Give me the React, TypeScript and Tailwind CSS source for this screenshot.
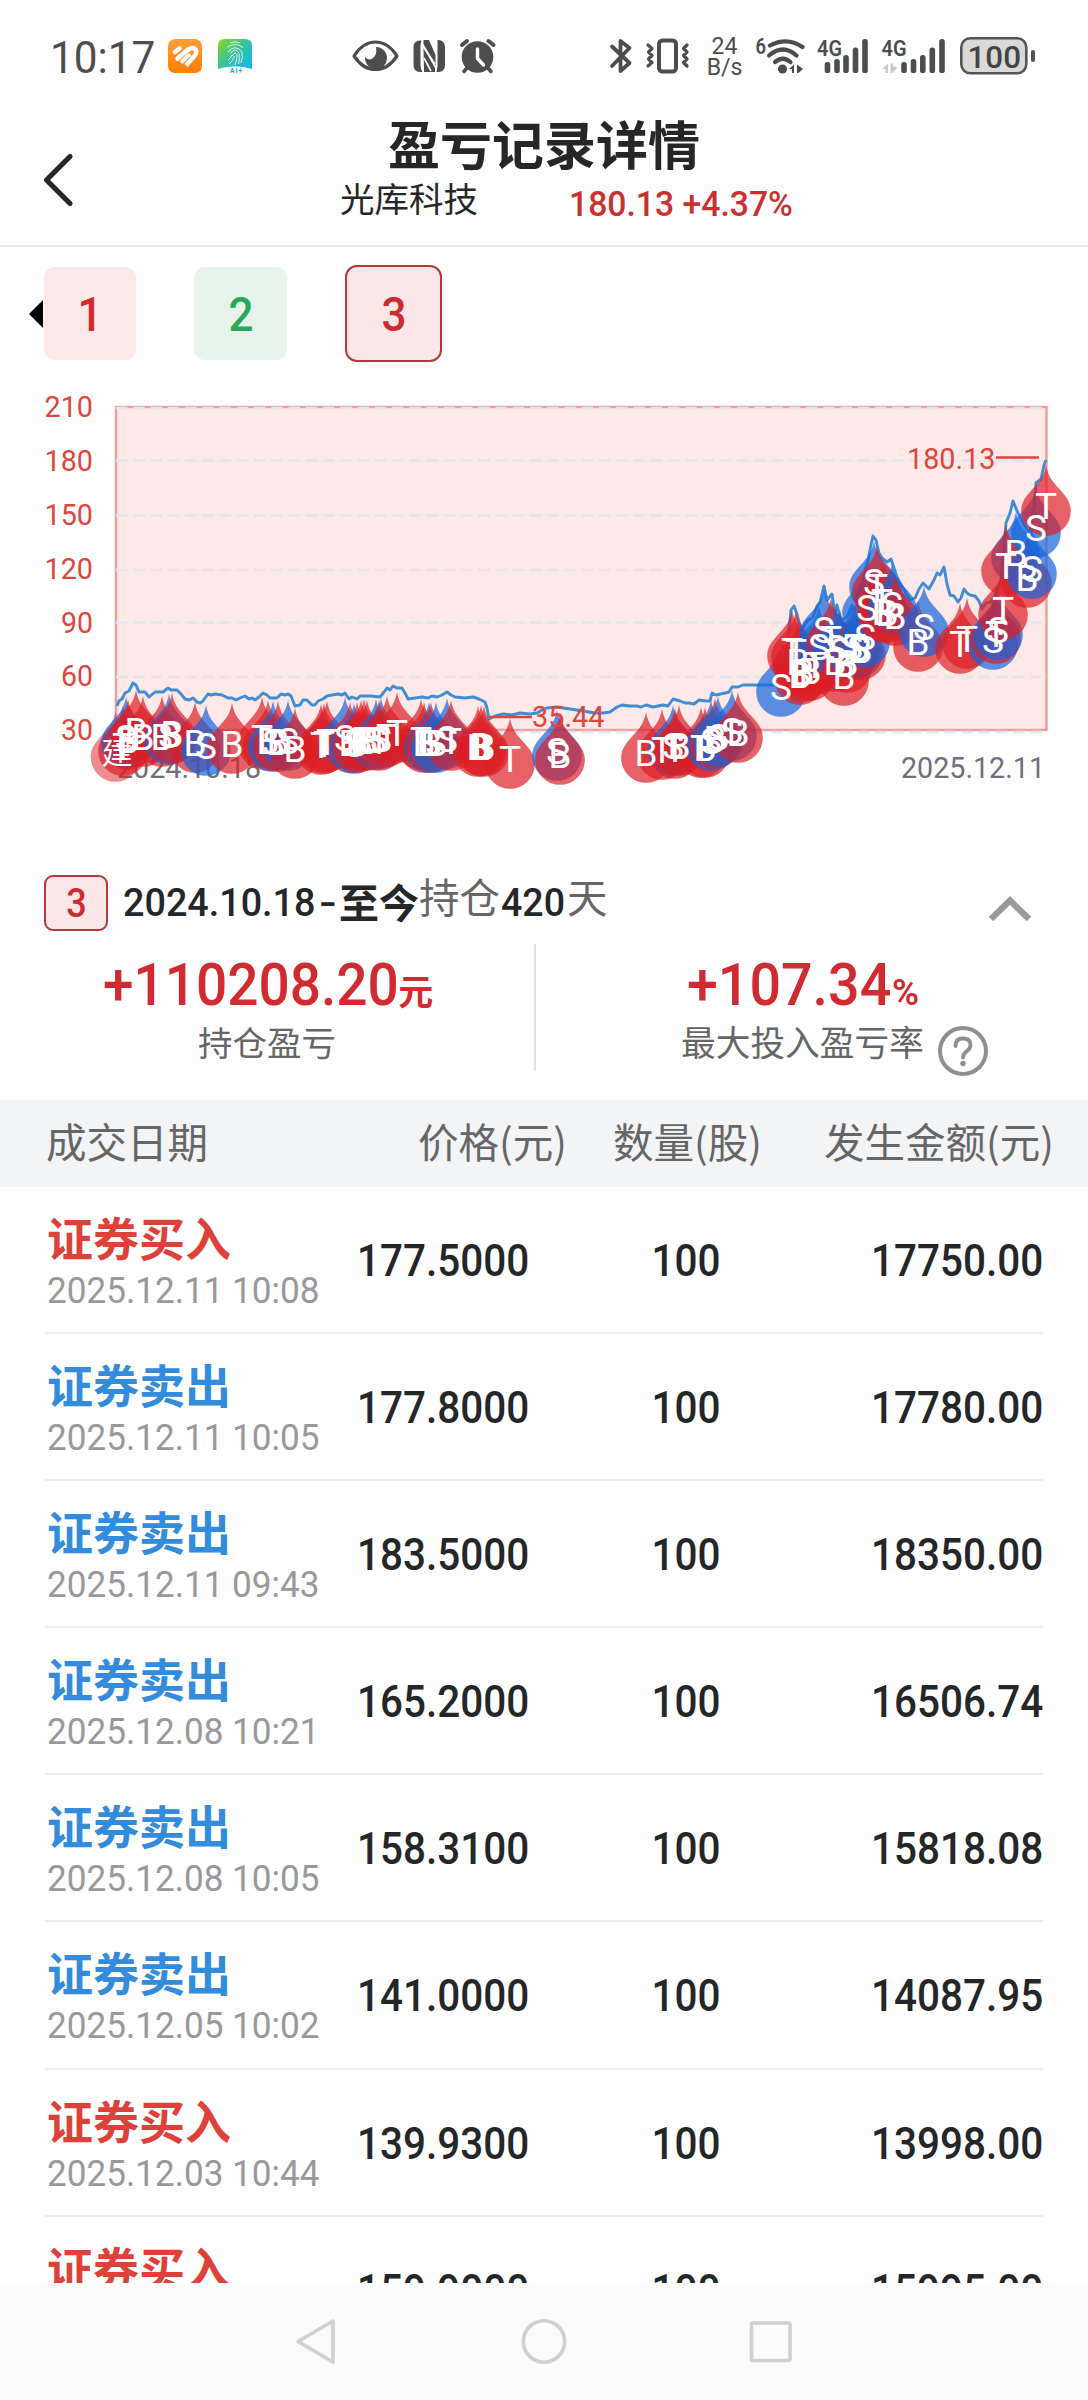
import React from "react";

const CJK = "font-['Noto_Sans_CJK_SC',sans-serif]";
const INK = "#4d4d4d";

/* ---------- status bar ---------- */

function SignalBars({ xs, x4g }: { xs: number[]; x4g: number }) {
  const tops = [62, 59, 55, 47.5, 39];
  return (
    <>
      <text x={x4g} y="55.5" fontSize="22.5" fontWeight="600" textLength="25" lengthAdjust="spacingAndGlyphs" fill={INK}>
        4G
      </text>
      {xs.map((x, i) => (
        <rect key={x} x={x - 2.8} y={tops[i]} width="5.6" height={73 - tops[i]} rx="2.6" fill={INK} />
      ))}
    </>
  );
}

function StatusBar() {
  return (
    <div className="flex h-[112px] items-start pt-[36px] pl-[50px] text-[#4d4d4d]">
      <div className="w-[117px] shrink-0">
        <span className="mt-px inline-block origin-left scale-x-[0.97] text-[43.6px] leading-[43px]">10:17</span>
      </div>
      <svg className="h-[40px] w-[36px] shrink-0" viewBox="167 36 36 40">
        <defs>
          <linearGradient id="orange" x1="0" y1="0" x2="0" y2="1">
            <stop offset="0" stopColor="#ff9f3a" />
            <stop offset="1" stopColor="#ff7d00" />
          </linearGradient>
        </defs>
        <rect x="168" y="39" width="34" height="34" rx="7" fill="url(#orange)" />
        <path d="M175 52 L179.500 48.500 M177.500 58.500 L187.500 50" fill="none" stroke="#fff" strokeWidth="4.600" strokeLinecap="round" />
        <path d="M187 50.500 Q192.500 46 195.500 49.500 Q197.500 52.500 194 56.500 L186 65.500" fill="none" stroke="#fff" strokeWidth="4.400" strokeLinecap="butt" strokeLinejoin="round" />
        <path d="M181 62.500 L190 54" stroke="#fff" strokeWidth="3.800" />
      </svg>
      <svg className="ml-[14px] h-[40px] w-[36px] shrink-0" viewBox="217 36 36 40">
        <defs>
          <linearGradient id="green" x1="0" y1="0" x2="1" y2="1">
            <stop offset="0" stopColor="#8fd41c" />
            <stop offset="0.5" stopColor="#35c3a0" />
            <stop offset="1" stopColor="#12b5f5" />
          </linearGradient>
        </defs>
        <path d="M218 46 Q218 39 225 39 H245 Q252 39 252 46 V69 Q235 63.500 218 69 Z" fill="url(#green)" />
        <g fill="none" stroke="#fff" strokeWidth="0.900" opacity="0.9">
          <path d="M230 43 Q235 40.500 240 43" />
          <path d="M227 47.500 Q235 41.500 243 47.500" />
          <path d="M228 52 Q235 43.500 242 52 Q243 58 241 63" />
          <path d="M230.500 53.500 Q235 46.500 239 53 Q240 59 238.500 64" />
          <path d="M232.500 56 Q235 50 237 55 Q237 60 235 65" />
          <path d="M228 60 Q231 58 232 55 M229 64 Q233 61 234.500 56" />
        </g>
        <text x="230" y="72.500" fontSize="6.500" fontWeight="700" fill="#1fa9c4" textLength="12">
          AI+
        </text>
      </svg>
      <svg className="ml-[97px] h-[40px] w-[50px] shrink-0" viewBox="350 36 50 40">
        <path d="M354 56 Q363 42 375.500 42 Q388 42 397 56 Q388 69.500 375.500 69.500 Q363 69.500 354 56 Z" fill="none" stroke={INK} strokeWidth="3.200" strokeLinejoin="round" />
        <path d="M376 47 A11 11 0 1 1 365 57 Q368 61 372.500 58.500 Q377.500 55 376 47 Z" fill={INK} />
      </svg>
      <svg className="ml-[11px] h-[40px] w-[36px] shrink-0" viewBox="411 36 36 40">
        <path d="M420 40.500 Q413.500 41 413.500 47 V65 Q413.500 71.500 420 72 H422.500 Q420.500 69 420.500 65 V46 Q420.500 43 421.500 40.500 Z" fill={INK} />
        <path d="M437.500 40 H439 Q445 41 445 47 V65 Q445 71.500 438.500 72 H436.500 L437.500 66 Z" fill={INK} />
        <path d="M423.500 48 L435 68 V72 H424 Z M423.500 40 H429 L435.500 55 V66 L423.500 44 Z" fill={INK} />
        <path d="M424 47.500 L435 64 M424 58 L431 71" stroke="#fff" strokeWidth="1.600" />
      </svg>
      <svg className="ml-[10px] h-[40px] w-[41px] shrink-0" viewBox="457 36 41 40">
        <circle cx="477.500" cy="57" r="15.800" fill={INK} />
        <path d="M462 45 L467 41 M493.500 45 L488.500 41" stroke={INK} strokeWidth="4" strokeLinecap="round" />
        <path d="M467 68 L464 71.500 M488 68 L491 71.500" stroke={INK} strokeWidth="3.600" strokeLinecap="round" />
        <path d="M477.500 49 V58.500 L483.500 65" fill="none" stroke="#fff" strokeWidth="3.400" strokeLinecap="round" strokeLinejoin="round" />
      </svg>
      <svg className="ml-[109px] h-[40px] w-[28px] shrink-0" viewBox="607 36 28 40">
        <path d="M612 46.500 L629.500 63 L620.500 71 V41 L629.500 48 L612 66" fill="none" stroke={INK} strokeWidth="3.800" strokeLinecap="round" strokeLinejoin="round" />
      </svg>
      <svg className="ml-[9px] h-[40px] w-[47px] shrink-0" viewBox="644 36 47 40">
        <rect x="659" y="40.500" width="17" height="31" rx="3.500" fill="none" stroke={INK} strokeWidth="4" />
        <path
          d="M648 45 L652 48.500 L648.500 52 L652 55.500 L648.500 59 L652 62.500 L648 66 M687 45 L683.500 48.500 L687 52 L683.500 55.500 L687 59 L683.500 62.500 L687 66"
          fill="none"
          stroke={INK}
          strokeWidth="3.200"
          strokeLinecap="round"
          strokeLinejoin="round"
        />
      </svg>
      <div className="ml-[14px] flex w-[39px] shrink-0 flex-col items-center text-[24px] leading-[21px]">
        <span className="inline-block scale-x-[0.96]">24</span>
        <span className="inline-block scale-x-[0.96]">B/s</span>
      </div>
      <svg className="ml-[10px] h-[40px] w-[53px] shrink-0" viewBox="754 36 53 40">
        <text x="755.500" y="54" fontSize="22.500" fontWeight="600" textLength="10.500" lengthAdjust="spacingAndGlyphs" fill={INK}>
          6
        </text>
        <path d="M770 45.500 Q787 36.500 802.500 47" fill="none" stroke={INK} strokeWidth="4.200" strokeLinecap="round" />
        <path d="M769 55.500 Q783 43.500 796.500 55.500" fill="none" stroke={INK} strokeWidth="4.200" strokeLinecap="round" />
        <path d="M775 62 Q783 55.500 790.500 62" fill="none" stroke={INK} strokeWidth="4.200" strokeLinecap="round" />
        <circle cx="782.500" cy="69" r="4.600" fill={INK} />
        <path d="M789 69 L794 64.500 V73 H792 V69 Z M797 64.500 L803 69 L798.500 73 H797 Z" fill={INK} />
      </svg>
      <svg className="ml-[8px] h-[40px] w-[54px] shrink-0" viewBox="815 36 54 40">
        <SignalBars x4g={817} xs={[827.5, 837, 846, 855.5, 865]} />
      </svg>
      <svg className="ml-[10px] h-[40px] w-[67px] shrink-0" viewBox="879 36 67 40">
        <SignalBars x4g={881.5} xs={[904, 913.5, 922.8, 932.3, 942]} />
        <path d="M882 69 L888 63.500 V73 H885.500 V69 Z M890.500 63.500 H893 V66 L897.500 67.500 L892 73 H890.500 Z" fill="#c8c8c8" />
      </svg>
      <svg className="ml-[12px] h-[40px] w-[80px] shrink-0" viewBox="957 36 80 40">
        <rect x="960.300" y="38.300" width="65" height="35" rx="9" fill="#d9d9d9" stroke="#555" strokeWidth="2.600" />
        <rect x="1030" y="50" width="4" height="12" rx="2" fill="#555" />
        <text x="966.500" y="68" fontSize="31.500" fontWeight="500" textLength="53.500" lengthAdjust="spacingAndGlyphs" fill="#444">
          100
        </text>
      </svg>
    </div>
  );
}

/* ---------- header ---------- */

function Header() {
  return (
    <header className="flex h-[135px] border-b-2 border-[#ebebeb]">
      <button className="flex w-[340px] shrink-0 items-start pt-[40px] pl-[40px]" aria-label="返回">
        <svg className="h-[56px] w-[34px]" viewBox="40 152 34 56">
          <path d="M70 156.500 L46.500 180 L70 203.500" fill="none" stroke="#242628" strokeWidth="5.200" strokeLinecap="round" strokeLinejoin="round" />
        </svg>
      </button>
      <div className="flex flex-col">
        <h1 className={`${CJK} mt-[5px] ml-[48px] text-[52px] leading-[52px] font-bold text-[#242628]`}>盈亏记录详情</h1>
        <div className="mt-[11px] flex items-start">
          <span className={`${CJK} w-[229px] text-[34.5px] leading-[34px] text-[#242628]`}>光库科技</span>
          <span className="mt-[7px] inline-block origin-left scale-x-[0.963] text-[35px] leading-[35px] font-medium whitespace-nowrap text-[#c9302f]">
            180.13 +4.37%
          </span>
        </div>
      </div>
    </header>
  );
}

function PeriodTabs() {
  const digit = "inline-block pt-[2px] scale-x-[0.9] text-[49px] leading-[49px] font-medium";
  return (
    <div className="flex h-[143px] items-start pt-[18px] pl-[29px]">
      <svg className="mt-[35px] h-[28px] w-[14px]" viewBox="0 0 14 28">
        <path d="M14 0 V28 L0 14 Z" fill="#000" />
      </svg>
      <div className="mt-[2px] ml-px flex h-[93px] w-[92px] items-center justify-center rounded-[11px] bg-[#fbe9e9] text-[#d32a2f]">
        <span className={digit}>1</span>
      </div>
      <div className="mt-[2px] ml-[58px] flex h-[93px] w-[93px] items-center justify-center rounded-[11px] bg-[#e6f5ec] text-[#2aa858]">
        <span className={digit}>2</span>
      </div>
      <div className="ml-[58px] flex h-[97px] w-[97px] items-center justify-center rounded-[12px] border-2 border-[#b5383c] bg-[#fbe6e7] text-[#cb2c30]">
        <span className={digit}>3</span>
      </div>
    </div>
  );
}

/* ---------- price chart ---------- */

const LINE =
  "117,706 119,701 122,699 125,693 129,691 133,683 136,685 139,692 145,692 149,697 155,692 163,692 168,688 171,690 177,690 181,694 185,699 189,700 193,698 197,702 200,703 203,701 205,698 208,694 211,695 215,694 222,695 228,698 232,698 236,700 240,698 245,696 249,699 252,698 255,700 259,697 263,693 267,695 270,698 277,698 281,694 285,695 288,694 291,696 295,706 300,705 303,700 307,700 312,705 315,705 318,701 323,699 327,696 332,695 338,694 342,695 345,693 349,699 352,697 357,699 360,696 371,696 380,697 384,692 387,688 390,690 393,686 397,688 402,688 405,693 408,699 415,698 422,697 428,698 432,696 437,697 442,695 447,692 451,695 455,697 465,698 473,697 479,699 485,702 487,708 489,719 495,716 503,714 512,715 520,713 530,714 537,713 542,710 547,708 557,707 570,709 583,711 595,713 603,713 610,712 617,707 622,705 630,706 637,706 641,707 646,705 653,707 663,705 668,706 673,699 680,701 685,703 689,703 694,704 699,700 706,701 710,701 712,693 716,695 725,693 729,692 732,687 738,687 743,685 781,685 785,680 788,640 791,610 794,606 797,614 799,622 802,630 807,621 813,617 817,606 820,602 824,586 827,600 832,594 835,613 837,605 841,620 847,617 852,605 855,612 858,598 864,575 868,560 871,545 873,536 876,540 879,553 882,558 887,562 891,559 897,577 904,590 910,600 915,598 919,589 923,583 929,589 934,580 937,573 940,575 944,567 947,584 950,595 954,596 958,602 961,598 964,589 967,593 970,595 975,596 979,601 982,609 986,603 991,602 996,593 1001,580 1004,547 1006,523 1010,513 1013,501 1017,511 1024,525 1030,533 1034,507 1036,483 1041,479 1044,465 1046,460";

type Marker = [x: number, labelY: number, label: "B" | "S" | "T", colour?: "r" | "b"];

/* B and T markers are buys unless marked otherwise, S markers are sells. */
const MARKERS: Marker[] = [
  [123, 746, "T"], [126, 738, "S"], [128, 740, "B"], [136, 731, "B"], [143, 737, "B"],
  [162, 737, "B"], [169, 735, "S"], [172, 734, "B"],
  [195, 743, "B"], [206, 746, "S"], [232, 744, "B"],
  [262, 738, "T"], [268, 741, "B"], [273, 742, "S"], [278, 742, "B"], [288, 741, "S"], [295, 749, "B"],
  [321, 745, "T"], [324, 744, "T"], [327, 742, "T"],
  [345, 738, "S"], [350, 743, "B"], [354, 744, "S"], [357, 743, "B"], [361, 741, "B"], [364, 740, "T"], [367, 741, "B"],
  [376, 740, "S"], [381, 739, "S"], [379, 741, "T"], [387, 737, "T"], [397, 733, "T"],
  [421, 740, "T"], [424, 743, "B"], [429, 743, "S"], [431, 743, "B"], [436, 743, "S"], [447, 739, "S"], [451, 741, "T"],
  [478, 747, "B"], [481, 746, "B"], [484, 747, "B"], [510, 759, "T"],
  [557, 751, "S"], [560, 755, "B"],
  [646, 753, "B"], [662, 750, "T"], [673, 746, "S"], [675, 749, "T"], [679, 746, "B"],
  [701, 748, "T"], [705, 748, "B"], [711, 741, "S"], [715, 739, "B"], [718, 737, "S"], [732, 731, "S"], [738, 733, "B"],
  [781, 687, "S"],
  [792, 651, "T"], [796, 652, "T"], [798, 662, "B"], [800, 675, "B"], [803, 672, "B"], [810, 671, "B"], [815, 665, "T"],
  [819, 647, "S"], [824, 630, "S"], [831, 639, "T"], [836, 648, "S"], [835, 662, "B"], [840, 651, "S"], [844, 676, "B"],
  [847, 663, "B"], [852, 647, "S"], [855, 647, "T"], [858, 648, "S"], [861, 650, "B"], [865, 637, "S"],
  [867, 608, "S"], [874, 582, "S"], [877, 587, "T"], [882, 602, "T"], [883, 612, "B"], [887, 613, "B"], [892, 605, "S"], [895, 616, "B"],
  [918, 642, "B"], [924, 627, "S"],
  [960, 644, "T"], [967, 639, "T"],
  [993, 640, "S"], [996, 634, "T"], [998, 630, "S"], [1003, 610, "T"],
  [1016, 553, "B", "b"], [1006, 566, "T"], [1027, 578, "B"], [1032, 569, "S"], [1036, 528, "S"], [1046, 506, "T"],
];

const DROP =
  "M0 0 C2 13 9 19 16 27 C21.5 33 24.800 38.500 24.800 46 A24.800 24.800 0 0 1 -24.800 46 C-24.800 38.500 -21.500 33 -16 27 C-9 19 -2 13 0 0 Z";

const TICKS = [
  { v: 210, line: 408, base: 417 },
  { v: 180, line: 460.5, base: 471 },
  { v: 150, line: 515.5, base: 525 },
  { v: 120, line: 570, base: 579 },
  { v: 90, line: 622.5, base: 632.5 },
  { v: 60, line: 677, base: 686 },
  { v: 30, line: 732, base: 739.5 },
];

function PriceChart() {
  return (
    <svg className="h-[465px] w-[1088px]" viewBox="0 390 1088 465">
      <rect x="116" y="407" width="930" height="323" fill="#ffe8e8" />
      <rect x="116" y="407" width="930.500" height="323" fill="none" stroke="#ef9d9d" strokeWidth="2.400" />
      {TICKS.map((t) => (
        <g key={t.v}>
          <line x1="116" x2="1046" y1={t.line} y2={t.line} stroke="#e2e4f0" strokeWidth="2.600" strokeDasharray="11.500 5.750" />
          <text x="93" y={t.base} fontSize="29.500" textAnchor="end" textLength={t.v > 99 ? 48.5 : 32} lengthAdjust="spacingAndGlyphs" fill="#d9483e">
            {t.v}
          </text>
        </g>
      ))}
      <text x="117" y="777.500" fontSize="29.500" fill="#6e7079" textLength="144" lengthAdjust="spacingAndGlyphs">
        2024.10.18
      </text>
      <text x="901" y="777.500" fontSize="29.500" fill="#6e7079" textLength="144" lengthAdjust="spacingAndGlyphs">
        2025.12.11
      </text>
      <polyline points={LINE} fill="none" stroke="#3f8dd2" strokeWidth="2.900" strokeLinejoin="round" />
      <g fillOpacity="0.7">
        <path d={DROP} transform="translate(115.500 711)" fill="#dc1c22" fillOpacity="0.500" />
        {MARKERS.map(([x, y, label, colour], i) => (
          <path key={i} d={DROP} transform={`translate(${x} ${y - 41})`} fill={colour === "b" || label === "S" ? "#1465dc" : "#dc1f26"} />
        ))}
      </g>
      <g fill="#fff" fontSize="37" textAnchor="middle">
        <text x="117" y="764" fontSize="31" className={CJK}>
          建
        </text>
        {MARKERS.map(([x, y, label], i) => (
          <text key={i} x={x} y={y + 13}>
            {label}
          </text>
        ))}
      </g>
      <g fill="#e0453c" fontSize="29.500">
        <path d="M489 717 H532 M996 457.500 H1039" stroke="#e0453c" strokeWidth="2.400" />
        <text x="532" y="727" textLength="72.500" lengthAdjust="spacingAndGlyphs">
          35.44
        </text>
        <text x="907" y="468.500" textLength="88.500" lengthAdjust="spacingAndGlyphs">
          180.13
        </text>
      </g>
    </svg>
  );
}

/* ---------- summary ---------- */

function Summary() {
  return (
    <section className="h-[245px]">
      <div className="flex h-[89px] items-start pt-[20px] pl-[44px]">
        <div className="flex h-[56px] w-[64px] items-center justify-center rounded-[9px] border-2 border-[#b5383c] bg-[#fbe6e7] pt-[2px] text-[#cb2c30]">
          <span className="inline-block scale-x-[0.9] text-[40px] leading-[40px] font-medium">3</span>
        </div>
        <span className="mt-[8px] ml-[15px] w-[216px] shrink-0 text-[#242628]">
          <span className="inline-block origin-left scale-x-[0.955] text-[39.5px] leading-[40px] font-medium whitespace-nowrap">
            2024.10.18<span className="inline-block scale-x-[1.35] pl-[5px]">-</span>
          </span>
        </span>
        <span className={`${CJK} mt-[6px] w-[80px] text-[40px] leading-[40px] font-bold text-[#242628]`}>至今</span>
        <span className={`${CJK} mt-[1px] w-[82px] text-[40.5px] leading-[40px] text-[#666]`}>持仓</span>
        <span className="mt-[8px] w-[66px] text-[#242628]">
          <span className="inline-block origin-left scale-x-[0.95] text-[39.5px] leading-[40px] font-medium">420</span>
        </span>
        <span className={`${CJK} mt-[1px] text-[40.5px] leading-[40px] text-[#666]`}>天</span>
        <svg className="mt-[18px] mr-[54px] ml-auto h-[34px] w-[48px]" viewBox="986 893 48 34">
          <path d="M991 919 L1010 900.500 L1029 919" fill="none" stroke="#9a9a9a" strokeWidth="6.400" />
        </svg>
      </div>
      <div className="flex h-[127px]">
        <div className="flex w-[536px] flex-col items-center border-r-2 border-[#e3e3e3]">
          <div className="mt-[11px] flex items-baseline pl-[2px] text-[#cf2b30]">
            <span className="mr-[-19px] inline-block origin-left scale-x-[0.94] text-[58.5px] leading-[60px] font-medium">+110208.20</span>
            <span className={`${CJK} text-[35px] leading-[35px] font-bold`}>元</span>
          </div>
          <span className={`${CJK} mt-[9px] text-[34.5px] leading-[35px] text-[#666]`}>持仓盈亏</span>
        </div>
        <div className="flex flex-1 flex-col pl-[145px]">
          <div className="mt-[11px] flex items-baseline pl-[6px] text-[#cf2b30]">
            <span className="mr-[-10px] inline-block origin-left scale-x-[0.95] text-[58.5px] leading-[60px] font-medium">+107.34</span>
            <span className="inline-block origin-left scale-x-[1.02] text-[36px] leading-[36px] font-semibold">%</span>
          </div>
          <div className="mt-[9px] flex">
            <span className={`${CJK} w-[256px] text-[34.7px] leading-[35px] whitespace-nowrap text-[#666]`}>最大投入盈亏率</span>
            <svg className="mt-px h-[52px] w-[52px] shrink-0" viewBox="0 0 52 52">
              <circle cx="26" cy="26" r="23" fill="none" stroke="#8f8f8f" strokeWidth="4" />
              <path d="M18.500 21 Q18.500 13.500 26 13.500 Q33.500 13.500 33.500 20 Q33.500 23.500 30 26 Q26 29 26 32.500" fill="none" stroke="#8f8f8f" strokeWidth="3.800" strokeLinecap="round" />
              <circle cx="26" cy="38.500" r="2.700" fill="#8f8f8f" />
            </svg>
          </div>
        </div>
      </div>
    </section>
  );
}

/* ---------- trades ---------- */

type Trade = { buy: boolean; time: string; price: string; amount: string };

const TRADES: Trade[] = [
  { buy: true, time: "2025.12.11 10:08", price: "177.5000", amount: "17750.00" },
  { buy: false, time: "2025.12.11 10:05", price: "177.8000", amount: "17780.00" },
  { buy: false, time: "2025.12.11 09:43", price: "183.5000", amount: "18350.00" },
  { buy: false, time: "2025.12.08 10:21", price: "165.2000", amount: "16506.74" },
  { buy: false, time: "2025.12.08 10:05", price: "158.3100", amount: "15818.08" },
  { buy: false, time: "2025.12.05 10:02", price: "141.0000", amount: "14087.95" },
  { buy: true, time: "2025.12.03 10:44", price: "139.9300", amount: "13998.00" },
  { buy: true, time: "2025.12.03 09:50", price: "159.9000", amount: "15995.00" },
];

function TradeRow({ t }: { t: Trade }) {
  const num = "inline-block scale-x-[0.93] text-[43.5px] leading-[44px] font-medium text-[#242628]";
  return (
    <div className="mr-[45px] ml-[45px] flex h-[147.1px] shrink-0 border-b-2 border-[#ececec]">
      <div className="w-[312px] shrink-0 pt-[26px] pl-[2px]">
        <div className={`${CJK} text-[46px] leading-[46px] font-bold ${t.buy ? "text-[#de4139]" : "text-[#338cdb]"}`}>
          {t.buy ? "证券买入" : "证券卖出"}
        </div>
        <div className="mt-[13px] inline-block origin-left scale-x-[0.962] text-[36.5px] leading-[37px] whitespace-nowrap text-[#999]">{t.time}</div>
      </div>
      <div className="w-[190px] shrink-0 pt-[53px]">
        <span className={`${num} origin-left`}>{t.price}</span>
      </div>
      <div className="w-[190px] shrink-0 pt-[53px] pl-[89px] text-center">
        <span className={num}>100</span>
      </div>
      <div className="flex-1 pt-[53px] text-right">
        <span className={`${num} origin-right`}>{t.amount}</span>
      </div>
    </div>
  );
}

function NavBar() {
  return (
    <nav className="flex h-[117px] items-center justify-center gap-[180px] bg-[#fbfbfc]">
      <svg className="h-[50px] w-[46px]" viewBox="296 2317 46 50">
        <path d="M334 2321 L299 2341.500 L334 2362 Z" fill="none" stroke="#d0d0d0" strokeWidth="3.600" strokeLinejoin="round" />
      </svg>
      <svg className="h-[50px] w-[46px]" viewBox="521 2317 46 50">
        <circle cx="544" cy="2341.500" r="20.700" fill="none" stroke="#d0d0d0" strokeWidth="3.600" />
      </svg>
      <svg className="h-[50px] w-[46px]" viewBox="746 2317 46 50">
        <rect x="750.500" y="2323" width="38.500" height="37.500" rx="1.500" fill="none" stroke="#d0d0d0" strokeWidth="3.600" />
      </svg>
    </nav>
  );
}

export default function App() {
  const th = `${CJK} text-[40.5px] leading-[40px] whitespace-nowrap`;
  return (
    <div className="flex h-[2400px] w-[1088px] flex-col overflow-hidden bg-[#fefefe] font-['Roboto',sans-serif]">
      <StatusBar />
      <Header />
      <PeriodTabs />
      <PriceChart />
      <Summary />
      <div className="flex h-[87px] shrink-0 items-start bg-[#f3f4f6] pt-[21px] pl-[46px] text-[#666]">
        <span className={`${th} w-[372px]`}>成交日期</span>
        <span className={`${th} w-[195px]`}>价格(元)</span>
        <span className={`${th} w-[211px]`}>数量(股)</span>
        <span className={th}>发生金额(元)</span>
      </div>
      <div className="flex h-[1096px] shrink-0 flex-col overflow-hidden">
        {TRADES.map((t) => (
          <TradeRow key={t.price} t={t} />
        ))}
      </div>
      <NavBar />
    </div>
  );
}
